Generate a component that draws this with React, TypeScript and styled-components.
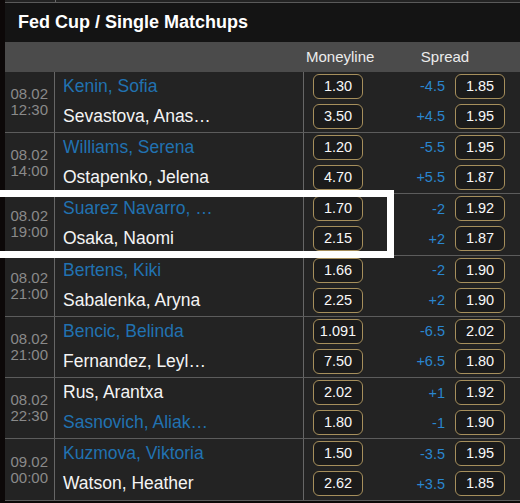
import React from "react";
import styled, { createGlobalStyle } from "styled-components";

const Global = createGlobalStyle`
  html, body { margin: 0; padding: 0; background: #0c0808; }
  body { font-family: "Liberation Sans", Arial, sans-serif; overflow: hidden; }
`;

const Page = styled.div`
  position: relative;
  width: 520px;
  height: 503px;
  overflow: hidden;
  padding-left: 5px;
  box-sizing: border-box;
`;

const Panel = styled.div`
  background: #232323;
  width: 515px;
`;

const Stub = styled.div`
  display: flex;
  height: 2.3px;
  border-bottom: 1px solid #5a5a5a;
`;

const StubDate = styled.div`
  width: 50px;
  border-right: 1px solid #6a6a6a;
`;

const Title = styled.div`
  height: 38.4px;
  background: #141414;
  color: #ffffff;
  font-weight: bold;
  font-size: 18px;
  display: flex;
  align-items: center;
  padding-left: 13px;
`;

const ColHeader = styled.div`
  height: 30px;
  background: #4b4b4b;
  display: flex;
  align-items: center;
  color: #ececec;
  font-size: 15px;
`;

const HeaderSpacer = styled.div`
  width: 301px;
`;

const HeaderOdds = styled.div`
  display: flex;
  width: 214px;
`;

const HeaderLabel = styled.div<{ $w: number }>`
  width: ${(p) => p.$w}px;
  text-align: center;
`;

const Row = styled.div`
  display: flex;
  height: 60.3px;
  border-bottom: 1px solid #5c5c5c;
`;

const DateCell = styled.div`
  width: 50px;
  border-right: 1px solid #666;
  display: flex;
  flex-direction: column;
  justify-content: center;
  align-items: flex-end;
  padding-right: 6px;
  box-sizing: border-box;
  color: #8a8a8a;
  font-size: 15px;
  line-height: 16px;
`;

const Names = styled.div`
  width: 249px;
  border-right: 1px solid #666;
  display: flex;
  flex-direction: column;
  gap: 5px;
  padding: 2px 0 3px 8px;
  box-sizing: border-box;
`;

const Name = styled.div<{ $fav: boolean }>`
  height: 25px;
  line-height: 25px;
  font-size: 17.5px;
  color: ${(p) => (p.$fav ? "#2172b1" : "#f4f4f4")};
  white-space: nowrap;
`;

const Odds = styled.div`
  width: 214px;
  display: flex;
  flex-direction: column;
  gap: 5px;
  padding: 2px 0 3px;
  box-sizing: border-box;
`;

const OddsLine = styled.div`
  display: flex;
  align-items: center;
  height: 25px;
`;

const Price = styled.div<{ $first?: boolean }>`
  width: 50px;
  height: 25px;
  box-sizing: border-box;
  border: 1px solid #a68f5c;
  border-radius: 6px;
  background: #1b1b1b;
  color: #f8f8f8;
  font-size: 14.5px;
  line-height: 23px;
  text-align: center;
  margin-left: ${(p) => (p.$first ? "9px" : "0")};
`;

const SpreadValue = styled.div`
  width: 82px;
  text-align: right;
  margin-right: 10px;
  color: #2a86cf;
  font-size: 14.5px;
`;

const Highlight = styled.div`
  position: absolute;
  left: -20px;
  top: 190px;
  width: 414px;
  height: 68px;
  border: 7px solid #ffffff;
  box-sizing: border-box;
  pointer-events: none;
`;

type Player = { name: string; fav: boolean; ml: string; sp: string; spOdds: string };
type Match = { date: string; time: string; players: [Player, Player] };

const matches: Match[] = [
  {
    date: "08.02", time: "12:30",
    players: [
      { name: "Kenin, Sofia", fav: true, ml: "1.30", sp: "-4.5", spOdds: "1.85" },
      { name: "Sevastova, Anas…", fav: false, ml: "3.50", sp: "+4.5", spOdds: "1.95" },
    ],
  },
  {
    date: "08.02", time: "14:00",
    players: [
      { name: "Williams, Serena", fav: true, ml: "1.20", sp: "-5.5", spOdds: "1.95" },
      { name: "Ostapenko, Jelena", fav: false, ml: "4.70", sp: "+5.5", spOdds: "1.87" },
    ],
  },
  {
    date: "08.02", time: "19:00",
    players: [
      { name: "Suarez Navarro, …", fav: true, ml: "1.70", sp: "-2", spOdds: "1.92" },
      { name: "Osaka, Naomi", fav: false, ml: "2.15", sp: "+2", spOdds: "1.87" },
    ],
  },
  {
    date: "08.02", time: "21:00",
    players: [
      { name: "Bertens, Kiki", fav: true, ml: "1.66", sp: "-2", spOdds: "1.90" },
      { name: "Sabalenka, Aryna", fav: false, ml: "2.25", sp: "+2", spOdds: "1.90" },
    ],
  },
  {
    date: "08.02", time: "21:00",
    players: [
      { name: "Bencic, Belinda", fav: true, ml: "1.091", sp: "-6.5", spOdds: "2.02" },
      { name: "Fernandez, Leyl…", fav: false, ml: "7.50", sp: "+6.5", spOdds: "1.80" },
    ],
  },
  {
    date: "08.02", time: "22:30",
    players: [
      { name: "Rus, Arantxa", fav: false, ml: "2.02", sp: "+1", spOdds: "1.92" },
      { name: "Sasnovich, Aliak…", fav: true, ml: "1.80", sp: "-1", spOdds: "1.90" },
    ],
  },
  {
    date: "09.02", time: "00:00",
    players: [
      { name: "Kuzmova, Viktoria", fav: true, ml: "1.50", sp: "-3.5", spOdds: "1.95" },
      { name: "Watson, Heather", fav: false, ml: "2.62", sp: "+3.5", spOdds: "1.85" },
    ],
  },
];

export default function App() {
  return (
    <>
      <Global />
      <Page>
        <Panel>
          <Stub>
            <StubDate />
          </Stub>
          <Title>Fed Cup / Single Matchups</Title>
          <ColHeader>
            <HeaderSpacer />
            <HeaderOdds>
              <HeaderLabel $w={68}>Moneyline</HeaderLabel>
              <HeaderLabel $w={142}>Spread</HeaderLabel>
            </HeaderOdds>
          </ColHeader>
          {matches.map((m, i) => (
            <Row key={i}>
              <DateCell>
                <div>{m.date}</div>
                <div>{m.time}</div>
              </DateCell>
              <Names>
                {m.players.map((p) => (
                  <Name key={p.name} $fav={p.fav}>{p.name}</Name>
                ))}
              </Names>
              <Odds>
                {m.players.map((p) => (
                  <OddsLine key={p.name}>
                    <Price $first>{p.ml}</Price>
                    <SpreadValue>{p.sp}</SpreadValue>
                    <Price>{p.spOdds}</Price>
                  </OddsLine>
                ))}
              </Odds>
            </Row>
          ))}
        </Panel>
        <Highlight />
      </Page>
    </>
  );
}
